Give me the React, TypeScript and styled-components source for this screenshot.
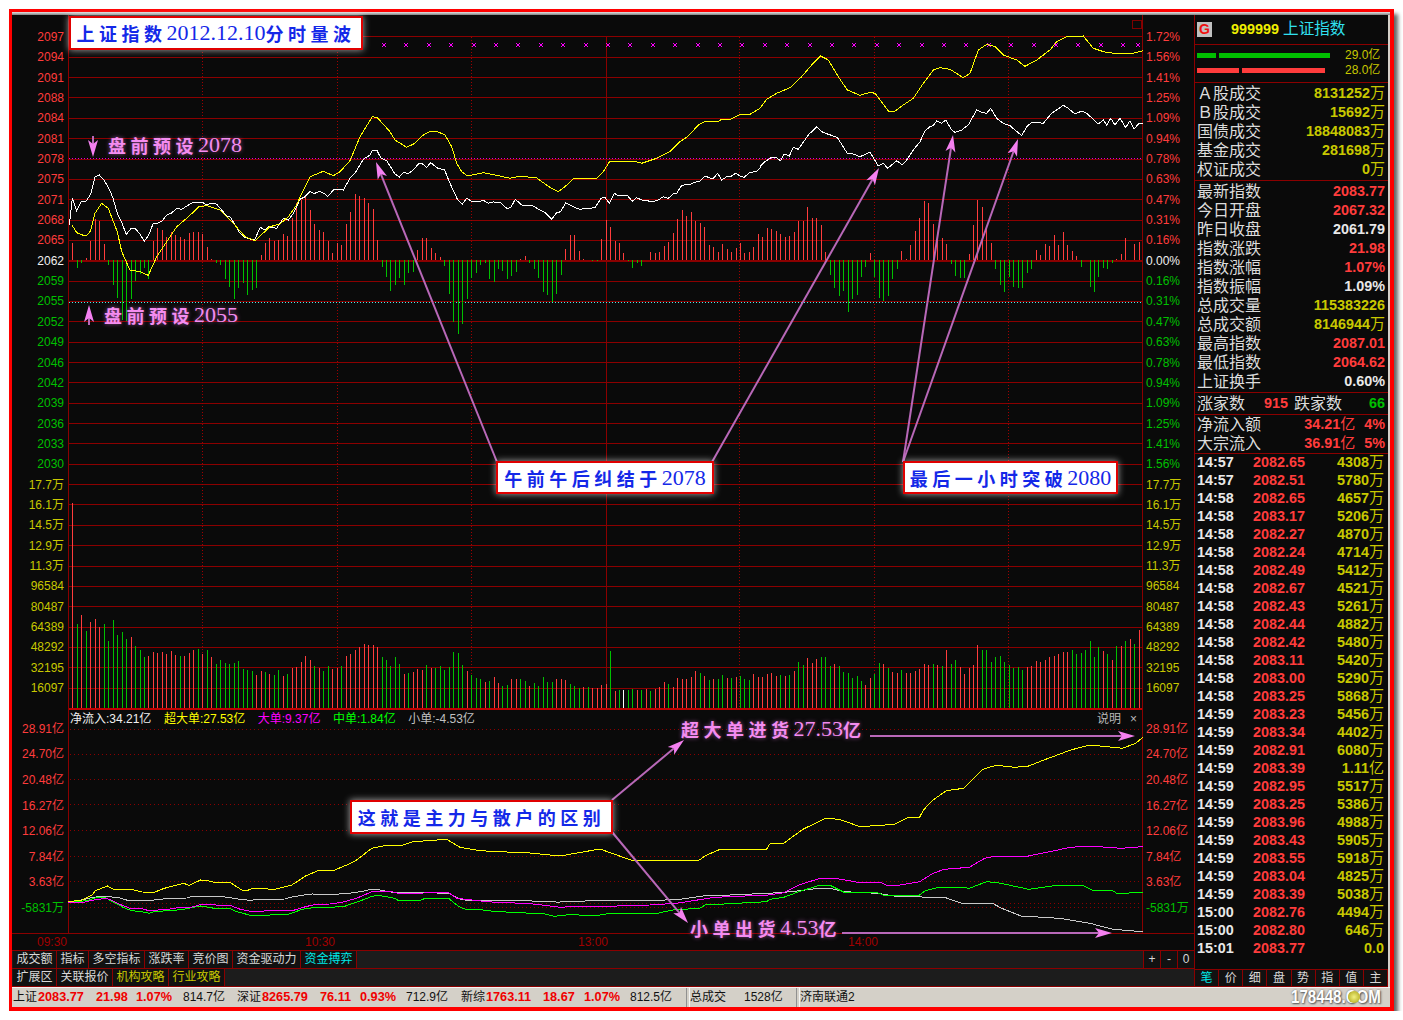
import React from "react";
import styled, { createGlobalStyle } from "styled-components";

const RED = "#ff3c3c";
const GREEN = "#00c000";
const YELLOW = "#c8c800";
const GRID = "#8b0000";
const UI_FONT = `"Liberation Sans", "Noto Sans CJK SC", sans-serif`;

type Pts = number[];

// the curves were read off zoomed crops, each crop has its own scale
const conv = (pts: Pts, fx: (n: number) => number, fy: (n: number) => number) => {
  const out: string[] = [];
  for (let i = 0; i < pts.length; i += 2) out.push(`${fx(pts[i]).toFixed(1)},${fy(pts[i + 1]).toFixed(1)}`);
  return out.join(" ");
};
const z1 = (p: Pts) => conv(p, (x) => x / 3, (y) => y / 3);
const z8 = (p: Pts) => conv(p, (x) => 340 + x / 3, (y) => 30 + y / 3);
const z9 = (p: Pts) => conv(p, (x) => 760 + x / 3, (y) => 30 + y / 3);
const z6 = (p: Pts) => conv(p, (x) => x / 3, (y) => 600 + y / 3);
const z7 = (p: Pts) => conv(p, (x) => 600 + x / 2.613, (y) => 610 + y / 3);
const z12 = (p: Pts) => conv(p, (x) => 68 + x / 2.904, (y) => 870 + y / 3);

const PRICE = [
  z1([208,675,217,595,230,632,244,604,258,604,272,583,285,530,298,525,312,540,328,568,338,592,352,640,366,670,379,703,392,687,406,686,420,702,433,724,446,705,460,670,474,669,487,662,500,645,514,640,530,625,545,628,560,618,580,607,607,607,620,615,636,609,650,613,665,630,680,648,692,652,705,675,720,700,735,712,750,717,765,717,781,682,795,690,807,680,830,685,850,655,865,660,880,640,900,598,915,590,930,574,942,581,958,574,972,580,983,590,1000,570,1010,567,1030,570,1050,535,1065,520]),
  z8([70,388,90,375,97,362,110,360,122,383,140,392,165,432,178,441,190,428,205,430,218,422,235,402,245,400,260,412,272,398,295,416,313,418,330,460,353,510,367,522,380,505,395,514,415,515,430,511,445,520,460,516,480,517,500,535,512,533,526,508,545,525,575,526,600,540,615,548,635,568,650,548,662,545,677,518,695,528,718,538,765,533,783,505,795,502,808,520,823,490,835,497,862,496,877,514,890,503,905,510,918,510,933,516,955,510,970,500,985,505,1000,492,1010,490,1025,466,1050,463,1070,455,1080,454,1095,438,1110,444,1120,445,1133,430,1145,450,1160,440,1170,441,1187,430,1200,438,1213,442,1228,428,1250,424,1260,414]),
  z9([0,410,15,395,35,382,48,382,62,393,72,372,88,378,100,352,115,358,145,315,170,290,185,305,205,313,232,322,262,370,280,372,300,380,330,367,355,408,370,400,383,415,410,392,427,404,440,390,460,360,480,335,495,303,510,290,520,287,530,272,545,280,557,270,575,300,585,307,605,300,625,285,650,240,665,247,680,250,692,235,710,265,730,280,750,287,765,300,785,317,800,290,815,277,830,277,850,280,875,250,910,226,925,235,945,252,965,243,980,250,1015,282,1030,270,1040,285,1052,265,1065,285,1080,265,1097,293,1110,272,1122,297,1137,280,1150,280]),
].join(" ");

const AVERAGE = [
  z1([216,675,230,698,250,706,262,705,272,692,285,640,305,610,325,625,338,660,352,695,365,755,390,810,420,815,445,826,470,770,500,725,530,680,560,655,597,620,620,617,660,630,700,670,735,710,765,722,810,680,840,672,865,650,890,615,905,580,930,530,970,514,1000,527,1020,515]),
  z8([30,392,60,320,97,260,112,263,150,305,165,330,200,352,225,340,245,318,270,304,290,304,315,315,335,350,350,400,365,425,382,438,430,428,465,435,510,445,540,438,590,444,610,458,630,472,655,485,675,470,700,446,770,445,790,425,808,396,825,394,885,394,905,400,950,385,990,365,1020,335,1045,318,1075,285,1095,274,1135,274,1145,268,1170,268,1200,254,1230,253,1260,235]),
  z9([20,208,50,190,90,173,125,140,155,105,182,78,205,90,235,140,262,180,300,196,330,187,345,190,385,243,405,243,430,225,460,205,490,160,520,120,540,113,570,118,610,143,630,130,655,60,680,43,705,50,730,75,770,90,795,109,830,90,870,60,890,35,920,20,970,18,1000,55,1040,68,1110,72,1150,62]),
].join(" ");

const FLOW_LINES = [
  {
    color: "#c8c8c8",
    points: [
      z12([0,95,30,92,60,85,85,80,120,80,150,84,180,93,215,92,250,90,295,85,345,84,360,79,450,80,500,88,530,91,555,88,630,87,645,82,680,76,710,72,750,75,775,73,815,70,850,65,880,58,905,60,950,68,1060,68,1110,72,1140,88,1165,92,1290,93,1310,91,1345,91,1350,95,1410,95,1425,97,1440,94,1568,92]),
      z7([130,872,210,868,270,858,340,855,440,850,500,845,570,835,600,835,640,845,725,850,780,860,900,862,945,880,1025,880,1050,895,1100,918,1200,925,1280,940,1340,958,1418,965]),
    ],
  },
  {
    color: "#00ff00",
    points: [
      z12([0,95,40,94,60,90,85,82,110,84,130,95,160,112,185,122,215,125,235,130,255,124,300,122,340,117,385,108,425,115,470,115,490,125,530,136,565,136,640,133,680,118,720,112,750,112,800,110,850,92,880,80,900,76,950,85,960,92,1020,92,1035,86,1105,85,1135,110,1155,118,1205,120,1245,125,1295,127,1345,130,1385,132,1412,139,1465,133,1490,136,1540,136,1568,131]),
      z7([150,910,190,900,260,895,275,885,435,875,445,868,480,862,520,845,575,825,605,828,640,848,725,848,740,855,835,855,850,842,885,832,945,832,965,835,1010,815,1040,818,1120,838,1180,828,1260,826,1290,842,1340,842,1350,850,1418,848]),
    ],
  },
  {
    color: "#ff00ff",
    points: [
      z12([0,97,40,98,75,90,110,85,125,90,150,103,180,115,215,116,235,122,290,118,320,113,360,111,385,104,470,106,500,118,530,124,570,123,655,121,690,110,720,103,760,102,800,96,840,84,880,66,940,65,960,70,1035,69,1060,68,1105,68,1130,85,1200,93,1240,97,1280,98,1350,102,1400,108,1430,112,1480,109,1568,109]),
      z7([130,885,200,880,300,862,440,855,480,848,520,825,575,805,615,805,680,818,735,818,750,826,780,826,835,815,870,790,900,778,965,772,1005,745,1035,738,1120,738,1230,712,1280,708,1360,715,1418,710]),
    ],
  },
  {
    color: "#ffff00",
    points: [
      z12([0,95,40,90,70,75,80,62,115,48,135,60,185,58,215,66,250,67,280,55,335,40,352,46,385,30,405,32,425,37,470,37,505,60,520,62,535,55,600,58,650,45,690,18,725,2,770,2]),
      z6([1040,795,1070,780,1115,745,1165,735,1200,738,1240,725,1340,718,1380,742,1440,752,1500,755,1590,759,1680,768,1800,747]),
      z7([80,750,140,753,260,750,275,737,310,720,340,718,435,718,445,700,480,700,530,658,590,625,625,628,680,650,770,643,805,622,835,622,845,600,870,570,905,542,950,535,1000,478,1035,466,1085,472,1120,468,1160,450,1230,420,1280,405,1365,415,1400,400,1418,382]),
    ],
  },
].map((l) => ({ color: l.color, points: l.points.join(" ") }));

// bar heights in px, plus is red, minus is green
const CHANGE_BARS = [
  17,-8,-3,2,19,41,39,16,-5,-25,-38,-60,-61,-39,-21,-14,-8,-19,19,32,30,23,28,25,23,21,27,28,28,26,13,1,-3,-5,-19,-27,-39,-28,-23,-35,-30,-28,5,17,22,19,20,26,24,42,
  57,60,64,50,36,30,28,19,7,17,
  15,36,48,66,64,62,57,51,20,-7,-17,-31,-25,-18,-25,-13,-12,10,22,22,12,7,3,-6,-34,-62,-74,-64,-39,-18,-13,-5,-3,-19,-22,-9,-11,-19,-16,-12,1,4,-3,-9,-18,-32,-35,-42,-34,-15,11,25,25,9,1,0,-1,-1,21,40,33,19,17,7,-1,-8,-3,-6,0,8,7,8,14,18,27,41,50,44,48,39,37,33,15,13,8,16,11,8,12,17,7,8,13,26,
  23,32,31,29,26,23,24,28,39,39,53,42,42,35,8,-15,-28,-36,-31,-52,-39,-35,-17,-7,7,-17,-38,-41,-36,-19,-9,9,1,15,29,42,59,57,36,22,22,16,-4,-16,-18,-18,6,35,60,53,31,17,-9,-25,-32,-17,-27,-28,-28,-13,-9,10,5,16,14,25,15,28,15,9,4,-7,0,-27,-32,-17,-8,-9,-3,1,6,22,0,16,18,-5,
];

const VOLUME_BARS = [
  205,-84,93,-77,86,89,81,-84,-67,-88,-73,-76,-69,71,-62,-58,-51,52,56,55,56,54,57,53,-52,52,55,58,-59,54,-58,51,-44,-48,-45,-44,-45,-47,-39,-38,-37,33,37,-36,34,-33,-38,32,-34,40,41,46,52,48,-42,40,-37,-42,39,40,-42,52,54,58,61,64,63,63,61,-51,-48,-42,-51,-44,34,-35,36,39,38,-43,40,-40,-42,-38,-41,-56,-55,-43,37,-33,-30,-29,26,-27,31,25,
  -22,-23,29,29,-29,-27,22,-25,-22,-31,-26,-26,29,29,28,-24,-22,-20,21,-21,20,20,
  23,24,-57,17,-18,-18,-18,-19,18,-18,19,-17,19,21,26,-24,21,30,29,29,31,37,-35,32,-28,29,-29,-33,30,-30,31,-32,-29,-28,34,31,31,34,35,32,-33,32,-33,37,-46,-43,50,45,49,-51,-51,-42,44,-42,-36,-35,-30,-32,-27,23,30,-34,-45,44,-40,36,35,-38,35,35,37,39,44,43,-44,43,-42,58,-44,-48,41,34,40,43,63,-58,-58,-46,-51,-52,-46,-43,-40,-41,-38,41,42,47,46,48,51,52,54,56,56,-58,-54,-55,-58,-67,-51,-61,57,-54,48,-62,62,-67,69,-64,78,89,
];

const CROSS_X = [384,406,429,451,474,496,518,541,563,586,608,630,653,675,698,720,742,765,787,810,832,854,877,899,922,944,966,989,1011,1034,1056,1078,1101,1123,1138];
const GRID_COUNT = 34;
const gridY = (n: number) => Math.round(36.4 + 20.35 * n) + 0.5;
const VERTICALS = [202, 337, 471, 606, 739, 874, 1008];
const FLOW_DOTS = [729, 754, 779, 804, 830, 856, 881, 903, 907];

const barX = (i: number, count: number) => Math.round(72.3 + (i * 1071) / (count - 1)) + 0.5;

const LEFT_PRICE = ["2097","2094","2091","2088","2084","2081","2078","2075","2071","2068","2065","2062","2059","2055","2052","2049","2046","2042","2039","2036","2033","2030"];
const RIGHT_PRICE = ["1.72%","1.56%","1.41%","1.25%","1.09%","0.94%","0.78%","0.63%","0.47%","0.31%","0.16%","0.00%","0.16%","0.31%","0.47%","0.63%","0.78%","0.94%","1.09%","1.25%","1.41%","1.56%"];
const VOLUME_LABELS = ["17.7万","16.1万","14.5万","12.9万","11.3万","96584","80487","64389","48292","32195","16097"];
const FLOW_LABELS = ["28.91亿","24.70亿","20.48亿","16.27亿","12.06亿","7.84亿","3.63亿","-5831万"];

const TICKS: [string, string, string][] = [
  ["14:57","2082.65","4308万"],["14:57","2082.51","5780万"],["14:58","2082.65","4657万"],["14:58","2083.17","5206万"],
  ["14:58","2082.27","4870万"],["14:58","2082.24","4714万"],["14:58","2082.49","5412万"],["14:58","2082.67","4521万"],
  ["14:58","2082.43","5261万"],["14:58","2082.44","4882万"],["14:58","2082.42","5480万"],["14:58","2083.11","5420万"],
  ["14:58","2083.00","5290万"],["14:58","2083.25","5868万"],["14:59","2083.23","5456万"],["14:59","2083.34","4402万"],
  ["14:59","2082.91","6080万"],["14:59","2083.39","1.11亿"],["14:59","2082.95","5517万"],["14:59","2083.25","5386万"],
  ["14:59","2083.96","4988万"],["14:59","2083.43","5905万"],["14:59","2083.55","5918万"],["14:59","2083.04","4825万"],
  ["14:59","2083.39","5038万"],["15:00","2082.76","4494万"],["15:00","2082.80","646万"],["15:01","2083.77","0.0"],
];

const TURNOVER: [string, string][] = [
  ["Ａ股成交","8131252万"],["Ｂ股成交","15692万"],["国债成交","18848083万"],["基金成交","281698万"],["权证成交","0万"],
];
const INDEX_STATS: [string, string, string][] = [
  ["最新指数","2083.77",RED],["今日开盘","2067.32",RED],["昨日收盘","2061.79","#e8e8e8"],["指数涨跌","21.98",RED],
  ["指数涨幅","1.07%",RED],["指数振幅","1.09%","#e8e8e8"],["总成交量","115383226",YELLOW],["总成交额","8146944万",YELLOW],
  ["最高指数","2087.01",RED],["最低指数","2064.62",RED],["上证换手","0.60%","#e8e8e8"],
];

const STATUS: { w: number; text: string; bold?: boolean }[] = [
  { w: 25, text: "上证" },{ w: 58, text: "2083.77", bold: true },{ w: 40, text: "21.98", bold: true },{ w: 47, text: "1.07%", bold: true },{ w: 54, text: "814.7亿" },
  { w: 25, text: "深证" },{ w: 58, text: "8265.79", bold: true },{ w: 40, text: "76.11", bold: true },{ w: 46, text: "0.93%", bold: true },{ w: 55, text: "712.9亿" },
  { w: 25, text: "新综" },{ w: 57, text: "1763.11", bold: true },{ w: 41, text: "18.67", bold: true },{ w: 46, text: "1.07%", bold: true },{ w: 56, text: "812.5亿" },
];

const Global = createGlobalStyle`
  html, body { margin: 0; background: #fff; }
  body { font-family: ${UI_FONT}; }
`;

const Frame = styled.div`
  box-sizing: border-box;
  width: 1385px;
  height: 1002px;
  margin: 9px 0 0 9px;
  border: solid #ff0000;
  border-width: 3px 4px 4px 3px;
  box-shadow: 4px 5px 4px rgba(0, 0, 0, 0.6);
  display: flex;
  flex-direction: column;
  background: #0a0a0a;
`;

const TitleStrip = styled.div`
  height: 3px;
  background: linear-gradient(#e4e4e4, #808080);
`;

const Main = styled.div`
  display: flex;
  height: 972px;
  border-right: 2px solid #d4d0c8;
`;

const ChartColumn = styled.div`
  position: relative;
  width: 1182px;
  display: flex;
  flex-direction: column;
`;

const ChartRow = styled.div`
  display: flex;
  height: 918px;
`;

const Axis = styled.div<{ $side: "left" | "right" }>`
  width: ${(p) => (p.$side === "left" ? 56 : 51)}px;
  box-sizing: border-box;
  padding: 12px ${(p) => (p.$side === "left" ? 4 : 0)}px 0 ${(p) => (p.$side === "left" ? 0 : 3)}px;
  text-align: ${(p) => (p.$side === "left" ? "right" : "left")};
  font-size: 12px;
  display: flex;
  flex-direction: column;
`;

const AxisLabel = styled.div<{ $h: number; $c: string }>`
  height: ${(p) => p.$h}px;
  line-height: ${(p) => p.$h}px;
  color: ${(p) => p.$c};
  white-space: nowrap;
`;

const AxisGap = styled.div`
  height: 18.5px;
`;

const Plot = styled.svg`
  display: block;
  width: 1075px;
  height: 918px;
`;

const TimeBar = styled.div`
  box-sizing: border-box;
  height: 18px;
  border-top: 1px solid ${GRID};
  border-bottom: 1px solid ${GRID};
  padding-left: 25px;
  display: grid;
  grid-template-columns: 268px 273px 270px auto;
  align-items: center;
  font-size: 12px;
  color: #a00000;
`;

const TabRow = styled.div`
  box-sizing: border-box;
  height: 18px;
  background: #1c1c1c;
  border-bottom: 1px solid ${GRID};
  display: flex;
  padding-left: 1px;
`;

const Tab = styled.div<{ $w: number; $c?: string }>`
  box-sizing: border-box;
  width: ${(p) => p.$w}px;
  background: #111;
  border-right: 1px solid ${GRID};
  color: ${(p) => p.$c ?? "#d8d8d8"};
  font-size: 12px;
  line-height: 17px;
  text-align: center;
`;

const ZoomKeys = styled.div`
  margin-left: auto;
  display: flex;
`;

const ZoomKey = styled.div`
  width: 16px;
  background: #111;
  border-left: 1px solid ${GRID};
  color: #d8d8d8;
  font-size: 12px;
  line-height: 17px;
  text-align: center;
`;

const ArrowLayer = styled.svg`
  position: absolute;
  left: 0;
  top: 0;
  width: 1182px;
  height: 936px;
  pointer-events: none;
`;

const Callout = styled.div<{ $x: number; $y: number; $w: number; $h: number }>`
  position: absolute;
  left: ${(p) => p.$x - 12}px;
  top: ${(p) => p.$y - 15}px;
  width: ${(p) => p.$w}px;
  height: ${(p) => p.$h}px;
  box-sizing: border-box;
  background: #fff;
  border: 2px solid #e00000;
  box-shadow: 0 0 7px rgba(255, 255, 255, 0.65);
  display: flex;
  align-items: center;
  justify-content: center;
  color: #1428e8;
  white-space: nowrap;
`;

const PinkNote = styled.div<{ $x: number; $y: number }>`
  position: absolute;
  left: ${(p) => p.$x - 12}px;
  top: ${(p) => p.$y - 15}px;
  display: flex;
  align-items: center;
  height: 26px;
  color: #f48cf0;
  white-space: nowrap;
  text-shadow: 0 0 4px rgba(240, 130, 240, 0.55);
`;

const Han = styled.span`
  font-family: "Noto Sans CJK SC", sans-serif;
  font-weight: 700;
  font-size: 18px;
  letter-spacing: 4.5px;
`;

const Digits = styled.span`
  font-family: "Liberation Serif", serif;
  font-size: 22px;
`;

const FlowLegend = styled.div`
  position: absolute;
  left: 58px;
  top: 697px;
  display: flex;
  gap: 12.5px;
  font-size: 12px;
  line-height: 14px;
  white-space: nowrap;
`;

const LegendItem = styled.span<{ $c: string }>`
  color: ${(p) => p.$c};
`;

const LegendAside = styled.div`
  position: absolute;
  left: 1085px;
  top: 697px;
  display: flex;
  gap: 9px;
  color: #b8b8b8;
  font-size: 12px;
  line-height: 14px;
`;

const Side = styled.aside`
  width: 194px;
  box-sizing: border-box;
  border-left: 1px solid ${GRID};
  display: flex;
  flex-direction: column;
`;

const Section = styled.div<{ $h: number; $pad?: number }>`
  box-sizing: border-box;
  height: ${(p) => p.$h}px;
  padding: ${(p) => p.$pad ?? 0}px 3px 0 2px;
  border-bottom: 1px solid ${GRID};
`;

const Head = styled.div`
  height: 30px;
  box-sizing: border-box;
  border-bottom: 1px solid ${GRID};
  padding: 0 0 2px 2px;
  display: flex;
  align-items: center;
`;

const Badge = styled.div`
  width: 15px;
  height: 15px;
  margin-top: 1px;
  background: #c0c0c0;
  color: #f01010;
  font: bold 14px/15px "Liberation Sans", sans-serif;
  text-align: center;
  margin-right: 19px;
`;

const Code = styled.span`
  color: #f0f000;
  font: bold 14.4px/18px "Liberation Sans", sans-serif;
  margin-right: 4px;
`;

const Name = styled.span`
  color: #30e0f0;
  font: 15.6px/18px ${UI_FONT};
`;

const GaugeRow = styled.div`
  display: flex;
  align-items: center;
  height: 15px;
  gap: 3px;
`;

const GaugeBar = styled.div<{ $w: number; $c: string }>`
  width: ${(p) => p.$w}px;
  height: 5px;
  background: ${(p) => p.$c};
`;

const GaugeValue = styled.span`
  position: absolute;
  left: 148px;
  margin-top: -1px;
  color: ${YELLOW};
  font-size: 12px;
  line-height: 15px;
`;

const Gauges = styled.div`
  position: relative;
  height: 30px;
`;

const StatRow = styled.div`
  display: flex;
  justify-content: space-between;
  height: 19px;
  line-height: 19px;
`;

const CountRow = styled.div`
  display: flex;
  height: 19px;
  line-height: 19px;
  > :nth-child(3) {
    margin-left: 6px;
  }
  > :last-child {
    margin-left: auto;
  }
`;

const StatLabel = styled.span`
  color: #dcdcdc;
  font: 16px/19px ${UI_FONT};
  white-space: nowrap;
`;

const StatValue = styled.span<{ $c: string; $w?: number }>`
  color: ${(p) => p.$c};
  font: bold 14.4px/19px "Liberation Sans", sans-serif;
  white-space: nowrap;
  ${(p) => (p.$w ? `width: ${p.$w}px; text-align: right;` : "")}
`;

const Unit = styled.span`
  font: 15px/1 ${UI_FONT};
`;

const TickList = styled.div`
  height: 514px;
  margin-top: -1px;
`;

const TickRow = styled.div`
  display: grid;
  grid-template-columns: 56px 1fr auto;
  padding: 0 4px 0 2px;
  height: 18px;
  line-height: 18px;
`;

const SideTabs = styled.div`
  display: flex;
  height: 18px;
  background: #111;
  border-top: 1px solid ${GRID};
  border-bottom: 1px solid ${GRID};
  box-sizing: border-box;
  margin-top: auto;
`;

const SideTab = styled.div<{ $active?: boolean }>`
  flex: 1;
  border-right: 1px solid ${GRID};
  color: ${(p) => (p.$active ? "#00e8e8" : "#d8d8d8")};
  font: 12px/16px ${UI_FONT};
  text-align: center;
`;

const StatusBar = styled.div`
  position: relative;
  box-sizing: border-box;
  height: 20px;
  background: #d4d0c8;
  border-top: 1px solid #f4f4f4;
  display: flex;
  align-items: center;
  font-size: 12px;
  line-height: 16px;
  color: #111;
  padding: 0 0 1px 1px;
`;

const StatusCell = styled.div<{ $w: number; $bold?: boolean }>`
  width: ${(p) => p.$w}px;
  flex: none;
  white-space: nowrap;
  ${(p) => (p.$bold ? "color: #f00000; font-weight: 700; font-size: 12.7px;" : "")}
`;

const StatusDivider = styled.div`
  flex: none;
  height: 19px;
  width: 2px;
  border-left: 1px solid #909090;
  border-right: 1px solid #f4f4f4;
`;

const Watermark = styled.div`
  position: absolute;
  left: 1279px;
  top: -3px;
  font: bold 18px/24px "Liberation Sans", sans-serif;
  color: #fdfdfd;
  text-shadow: 1px 1px 2px #555, 0 0 2px #777;
  white-space: nowrap;
  transform: scaleX(0.84);
  transform-origin: left center;
`;

const Coin = styled.div`
  position: absolute;
  left: 1336px;
  top: 3px;
  width: 12px;
  height: 12px;
  border-radius: 50%;
  background: radial-gradient(#f2f080, #a8a010);
`;

const WithUnit = ({ text }: { text: string }) => {
  const last = text.slice(-1);
  if (last !== "万" && last !== "亿") return <>{text}</>;
  return (
    <>
      {text.slice(0, -1)}
      <Unit>{last}</Unit>
    </>
  );
};

const Bars = ({ data, base, upward }: { data: number[]; base: number; upward?: boolean }) => (
  <g strokeWidth="1" shapeRendering="crispEdges">
    {data.map((h, i) =>
      h === 0 ? null : (
        <line
          key={i}
          x1={barX(i, data.length)}
          x2={barX(i, data.length)}
          y1={base}
          y2={base - (upward ? Math.abs(h) : h)}
          stroke={h > 0 ? RED : GREEN}
        />
      )
    )}
  </g>
);

const Arrow = ({ x1, y1, x2, y2 }: { x1: number; y1: number; x2: number; y2: number }) => {
  const a = Math.atan2(y2 - y1, x2 - x1);
  const ux = Math.cos(a);
  const uy = Math.sin(a);
  const len = 17;
  const half = 5;
  const bx = x2 - ux * len;
  const by = y2 - uy * len;
  const nx = x2 - ux * (len - 4);
  const ny = y2 - uy * (len - 4);
  return (
    <g>
      <line x1={x1} y1={y1} x2={nx} y2={ny} stroke="#b868b8" strokeWidth="2" />
      <polygon
        points={`${x2},${y2} ${bx - uy * half},${by + ux * half} ${nx},${ny} ${bx + uy * half},${by - ux * half}`}
        fill="#f480f0"
      />
    </g>
  );
};

const priceColor = (i: number) => (i < 11 ? RED : i === 11 ? "#f0f0f0" : GREEN);

export default function App() {
  return (
    <>
      <Global />
      <Frame>
        <TitleStrip />
        <Main>
          <ChartColumn>
            <ChartRow>
              <Axis $side="left">
                {LEFT_PRICE.map((t, i) => (
                  <AxisLabel key={t} $h={20.35} $c={priceColor(i)}>{t}</AxisLabel>
                ))}
                {VOLUME_LABELS.map((t) => (
                  <AxisLabel key={t} $h={20.35} $c={YELLOW}>{t}</AxisLabel>
                ))}
                <AxisGap />
                {FLOW_LABELS.map((t, i) => (
                  <AxisLabel key={t} $h={25.6} $c={i === 7 ? GREEN : RED}>{t}</AxisLabel>
                ))}
              </Axis>
              <Plot viewBox="68 15 1075 918">
                <g shapeRendering="crispEdges">
                  {Array.from({ length: GRID_COUNT }, (_, n) => (
                    <line
                      key={n}
                      x1={68}
                      x2={1143}
                      y1={gridY(n)}
                      y2={gridY(n)}
                      stroke={n === 33 ? "#c00000" : GRID}
                      strokeWidth={n === 11 || n === 33 ? 2 : 1}
                    />
                  ))}
                  {VERTICALS.map((x, i) => (
                    <line
                      key={x}
                      x1={x + 0.5}
                      x2={x + 0.5}
                      y1={37}
                      y2={708}
                      stroke={i === 3 ? GRID : "#a00000"}
                      strokeDasharray={i === 3 ? undefined : "1 2"}
                    />
                  ))}
                  {FLOW_DOTS.map((y) => (
                    <line key={y} x1={70} x2={1143} y1={y + 0.5} y2={y + 0.5} stroke="#8b0000" strokeDasharray="1 3" />
                  ))}
                  <line x1={68.5} x2={68.5} y1={15} y2={933} stroke={GRID} />
                  <line x1={1142.5} x2={1142.5} y1={15} y2={933} stroke={GRID} />
                  <rect x={1132.5} y={20.5} width={9} height={8} fill="none" stroke="#800000" />
                  <line x1={69} x2={1143} y1={158.5} y2={158.5} stroke="#e000e0" strokeDasharray="1 2" />
                  <line x1={69} x2={1143} y1={302.5} y2={302.5} stroke="#40f0f0" strokeDasharray="1 2" />
                </g>
                {CROSS_X.map((x) => (
                  <path key={x} d={`M${x - 2} 43l4 4M${x + 2} 43l-4 4`} stroke="#ff00ff" strokeWidth="1" />
                ))}
                <Bars data={CHANGE_BARS} base={260} />
                <Bars data={VOLUME_BARS} base={708} upward />
                <line x1={623.5} x2={623.5} y1={708} y2={690} stroke="#fff" shapeRendering="crispEdges" />
                <g fill="none" strokeWidth="1" shapeRendering="crispEdges">
                  <polyline points={PRICE} stroke="#ffffff" />
                  <polyline points={AVERAGE} stroke="#ffff00" />
                  {FLOW_LINES.map((l) => (
                    <polyline key={l.color} points={l.points} stroke={l.color} />
                  ))}
                </g>
              </Plot>
              <Axis $side="right">
                {RIGHT_PRICE.map((t, i) => (
                  <AxisLabel key={i} $h={20.35} $c={priceColor(i)}>{t}</AxisLabel>
                ))}
                {VOLUME_LABELS.map((t) => (
                  <AxisLabel key={t} $h={20.35} $c={YELLOW}>{t}</AxisLabel>
                ))}
                <AxisGap />
                {FLOW_LABELS.map((t, i) => (
                  <AxisLabel key={t} $h={25.6} $c={i === 7 ? GREEN : RED}>{t}</AxisLabel>
                ))}
              </Axis>
            </ChartRow>
            <TimeBar>
              <span>09:30</span>
              <span>10:30</span>
              <span>13:00</span>
              <span>14:00</span>
            </TimeBar>
            <TabRow>
              <Tab $w={44}>成交额</Tab>
              <Tab $w={32}>指标</Tab>
              <Tab $w={56}>多空指标</Tab>
              <Tab $w={44}>涨跌率</Tab>
              <Tab $w={44}>竞价图</Tab>
              <Tab $w={68}>资金驱动力</Tab>
              <Tab $w={56} $c="#00e8e8">资金搏弈</Tab>
              <ZoomKeys>
                <ZoomKey>+</ZoomKey>
                <ZoomKey>-</ZoomKey>
                <ZoomKey>0</ZoomKey>
              </ZoomKeys>
            </TabRow>
            <TabRow>
              <Tab $w={44}>扩展区</Tab>
              <Tab $w={56}>关联报价</Tab>
              <Tab $w={56} $c={YELLOW}>机构攻略</Tab>
              <Tab $w={56} $c={YELLOW}>行业攻略</Tab>
            </TabRow>

            <FlowLegend>
              <LegendItem $c="#f0f0f0">净流入:34.21亿</LegendItem>
              <LegendItem $c="#ffff00">超大单:27.53亿</LegendItem>
              <LegendItem $c="#ff00ff">大单:9.37亿</LegendItem>
              <LegendItem $c="#00ff00">中单:1.84亿</LegendItem>
              <LegendItem $c="#c0c0c0">小单:-4.53亿</LegendItem>
            </FlowLegend>
            <LegendAside>
              <span>说明</span>
              <span>×</span>
            </LegendAside>

            <ArrowLayer viewBox="12 15 1182 936">
              <Arrow x1={497} y1={462} x2={376} y2={162} />
              <Arrow x1={712} y1={462} x2={879} y2={168} />
              <Arrow x1={903} y1={462} x2={953} y2={135} />
              <Arrow x1={903} y1={462} x2={1018} y2={139} />
              <Arrow x1={612} y1={800} x2={684} y2={740} />
              <Arrow x1={612} y1={832} x2={688} y2={923} />
              <Arrow x1={870} y1={736} x2={1135} y2={736} />
              <Arrow x1={842} y1={933} x2={1112} y2={933} />
              <Arrow x1={93} y1={136} x2={93} y2={157} />
              <Arrow x1={89} y1={325} x2={89} y2={305} />
            </ArrowLayer>

            <Callout $x={69} $y={16} $w={294} $h={34}>
              <Han>上证指数</Han>
              <Digits>2012.12.10</Digits>
              <Han>分时量波</Han>
            </Callout>
            <Callout $x={496} $y={461} $w={218} $h={33}>
              <Han>午前午后纠结于</Han>
              <Digits>2078</Digits>
            </Callout>
            <Callout $x={903} $y={461} $w={215} $h={33}>
              <Han>最后一小时突破</Han>
              <Digits>2080</Digits>
            </Callout>
            <Callout $x={350} $y={800} $w={263} $h={34}>
              <Han>这就是主力与散户的区别</Han>
            </Callout>

            <PinkNote $x={108} $y={132}>
              <Han>盘前预设</Han>
              <Digits>2078</Digits>
            </PinkNote>
            <PinkNote $x={104} $y={302}>
              <Han>盘前预设</Han>
              <Digits>2055</Digits>
            </PinkNote>
            <PinkNote $x={681} $y={716}>
              <Han>超大单进货</Han>
              <Digits>27.53</Digits>
              <Han>亿</Han>
            </PinkNote>
            <PinkNote $x={690} $y={915}>
              <Han>小单出货</Han>
              <Digits>4.53</Digits>
              <Han>亿</Han>
            </PinkNote>
          </ChartColumn>

          <Side>
            <Head>
              <Badge>G</Badge>
              <Code>999999</Code>
              <Name>上证指数</Name>
            </Head>
            <Section $h={38} $pad={3}>
              <Gauges>
                <GaugeRow>
                  <GaugeBar $w={19} $c={GREEN} />
                  <GaugeBar $w={111} $c={GREEN} />
                  <GaugeValue>29.0亿</GaugeValue>
                </GaugeRow>
                <GaugeRow>
                  <GaugeBar $w={42} $c={RED} />
                  <GaugeBar $w={83} $c={RED} />
                  <GaugeValue>28.0亿</GaugeValue>
                </GaugeRow>
              </Gauges>
            </Section>
            <Section $h={98} $pad={1}>
              {TURNOVER.map(([label, value]) => (
                <StatRow key={label}>
                  <StatLabel>{label}</StatLabel>
                  <StatValue $c={YELLOW}><WithUnit text={value} /></StatValue>
                </StatRow>
              ))}
            </Section>
            <Section $h={212} $pad={1}>
              {INDEX_STATS.map(([label, value, color]) => (
                <StatRow key={label}>
                  <StatLabel>{label}</StatLabel>
                  <StatValue $c={color}><WithUnit text={value} /></StatValue>
                </StatRow>
              ))}
            </Section>
            <Section $h={22} $pad={1}>
              <CountRow>
                <StatLabel>涨家数</StatLabel>
                <StatValue $c={RED} $w={43}>915</StatValue>
                <StatLabel>跌家数</StatLabel>
                <StatValue $c={GREEN}>66</StatValue>
              </CountRow>
            </Section>
            <Section $h={39}>
              <StatRow>
                <StatLabel>净流入额</StatLabel>
                <StatValue $c={RED} $w={95}><WithUnit text="34.21亿" /></StatValue>
                <StatValue $c={RED} $w={30}>4%</StatValue>
              </StatRow>
              <StatRow>
                <StatLabel>大宗流入</StatLabel>
                <StatValue $c={RED} $w={95}><WithUnit text="36.91亿" /></StatValue>
                <StatValue $c={RED} $w={30}>5%</StatValue>
              </StatRow>
            </Section>
            <TickList>
              {TICKS.map(([time, price, vol], i) => (
                <TickRow key={i}>
                  <StatValue $c="#e8e8e8">{time}</StatValue>
                  <StatValue $c={RED}>{price}</StatValue>
                  <StatValue $c={YELLOW}><WithUnit text={vol} /></StatValue>
                </TickRow>
              ))}
            </TickList>
            <SideTabs>
              {["笔", "价", "细", "盘", "势", "指", "值", "主"].map((t, i) => (
                <SideTab key={t} $active={i === 0}>{t}</SideTab>
              ))}
            </SideTabs>
          </Side>
        </Main>
        <StatusBar>
          {STATUS.map((s, i) => (
            <StatusCell key={i} $w={s.w} $bold={s.bold}>{s.text}</StatusCell>
          ))}
          <StatusDivider />
          <StatusCell $w={54}>总成交</StatusCell>
          <StatusCell $w={52}>1528亿</StatusCell>
          <StatusDivider />
          <StatusCell $w={70}>济南联通2</StatusCell>
          <Watermark>178448.COM</Watermark>
          <Coin />
        </StatusBar>
      </Frame>
    </>
  );
}
